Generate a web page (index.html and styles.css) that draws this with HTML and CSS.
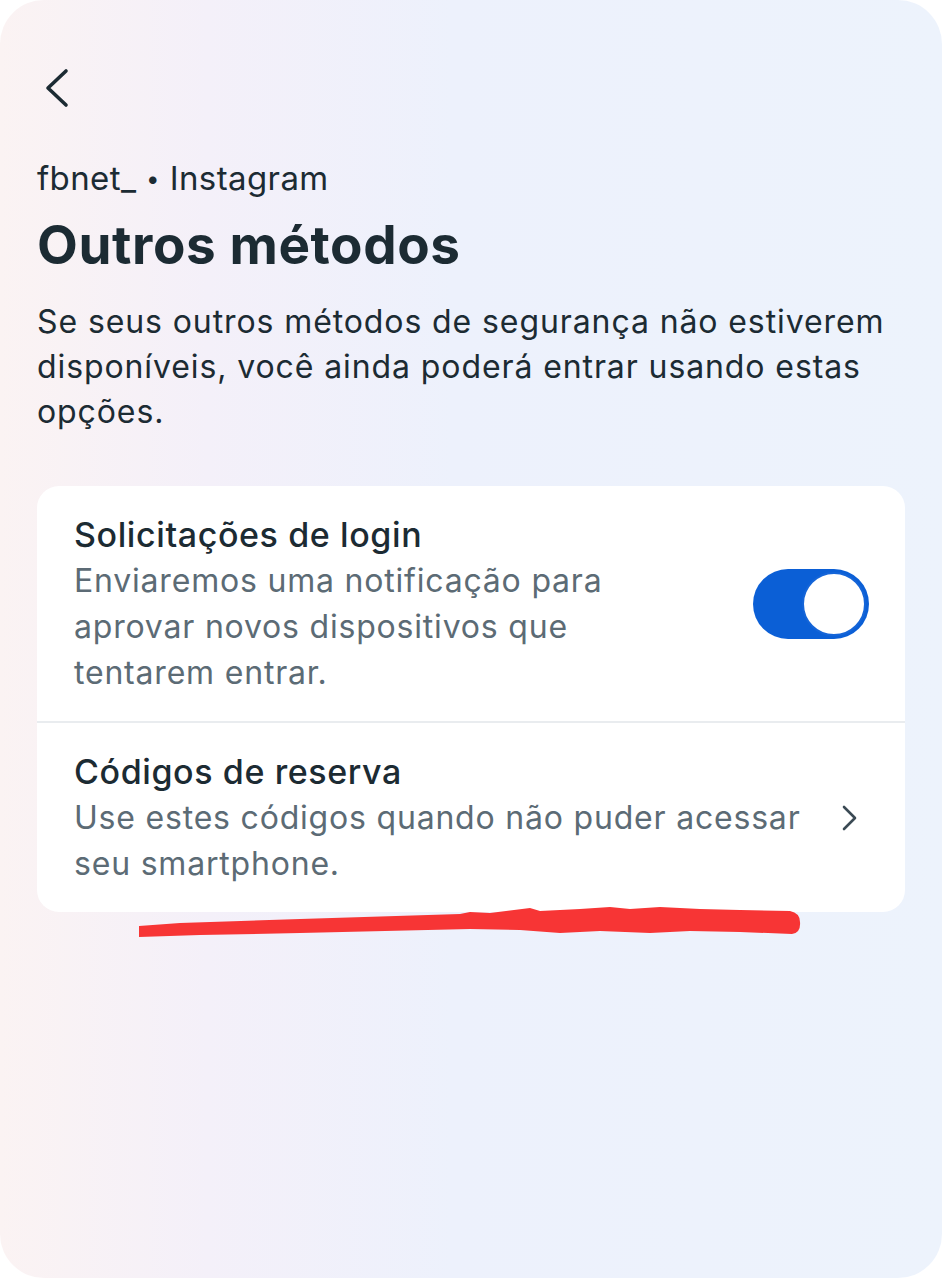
FILE: index.html
```html
<!DOCTYPE html>
<html lang="pt-BR">
<head>
  <meta charset="UTF-8">
  <meta name="viewport" content="width=device-width, initial-scale=1">
  <title>Outros métodos</title>
  <link rel="stylesheet" href="styles.css">
</head>
<body>

  <div class="screen">
    <button class="back" aria-label="Voltar">
      <svg width="28" height="40" viewBox="0 0 28 40" fill="none">
        <path d="M24 3 L6 20 L24 37" stroke="#1c2b33" stroke-width="3.6" stroke-linecap="round" stroke-linejoin="round"/>
      </svg>
    </button>

    <div class="account">fbnet_ <span class="dot">•</span> Instagram</div>
    <h1>Outros métodos</h1>
    <p class="intro">Se seus outros métodos de segurança não estiverem disponíveis, você ainda poderá entrar usando estas opções.</p>

    <div class="card">
      <div class="row">
        <div class="row-text narrow">
          <div class="row-title">Solicitações de login</div>
          <div class="row-sub">Enviaremos uma notificação para aprovar novos dispositivos que tentarem entrar.</div>
        </div>
        <div class="toggle on"><span class="knob"></span></div>
      </div>
      <div class="row">
        <div class="row-text">
          <div class="row-title">Códigos de reserva</div>
          <div class="row-sub">Use estes códigos quando não puder acessar seu smartphone.</div>
        </div>
        <svg class="chevron" width="20" height="26" viewBox="0 0 20 26" fill="none">
          <path d="M5 2 L16 13 L5 24" stroke="#3b4a54" stroke-width="2.6" stroke-linecap="round" stroke-linejoin="round"/>
        </svg>
      </div>
    </div>

    <svg class="scribble" width="680" height="45" viewBox="0 0 680 45">
      <path d="M9 26 L50 23 L170 19 L330 14 L340 12 L360 13 L400 8 L410 11 L450 9 L480 7 L500 9 L530 7 L570 9 L610 10 L660 11 Q670 13 670 22 Q671 33 662 34 L610 32 L560 31 L520 33 L470 31 L430 33 L390 30 L340 29 L170 33 L70 35 L9 37 Z" fill="#f73535"/>
    </svg>
  </div>

</body>
</html>
```

FILE: styles.css
```css
body {
  margin: 0;
  background: #fff;
  font-family: Inter, 'Noto Sans', sans-serif;
  color: #1c2b33;
}

.screen {
  position: relative;
  box-sizing: border-box;
  height: 1278px;
  padding: 0 37px;
  border-radius: 44px;
  background: linear-gradient(90deg, #fbf3f3 0%, #f4f0f9 22%, #edf1fc 48%, #edf3fc 100%);
  overflow: hidden;
}

.back {
  display: block;
  margin: 68px 0 0 5px;
  padding: 0;
  border: none;
  background: none;
  height: 40px;
}

.account {
  margin-top: 50px;
  font-size: 33px;
  line-height: 40px;
  letter-spacing: 0.4px;
}

.account .dot {
  font-size: 24px;
  vertical-align: 3px;
}

h1 {
  margin: 17px 0 0;
  font-size: 53px;
  line-height: 58px;
  font-weight: 700;
  letter-spacing: 0.6px;
}

.intro {
  margin: 25px 0 0;
  font-size: 32px;
  line-height: 45px;
  letter-spacing: 0.9px;
}

.card {
  margin-top: 52px;
  background: #fff;
  border-radius: 22px;
  overflow: hidden;
}

.row {
  display: flex;
  align-items: center;
  justify-content: space-between;
  padding: 26px 36px 25px 37px;
}

.row + .row {
  border-top: 2px solid #e9ecef;
}

.row-text {
  max-width: 760px;
}

.row-text.narrow {
  max-width: 620px;
}

.row-title {
  font-size: 34px;
  line-height: 46px;
  letter-spacing: 0.6px;
  font-weight: 500;
  color: #1c2b33;
}

.row-sub {
  font-size: 32px;
  line-height: 46px;
  letter-spacing: 0.8px;
  color: #5c6b75;
}

.toggle {
  display: flex;
  align-items: center;
  justify-content: flex-end;
  box-sizing: border-box;
  width: 116px;
  height: 70px;
  padding: 3px;
  border-radius: 35px;
  background: #0b5fd6;
}

.knob {
  box-sizing: border-box;
  width: 64px;
  height: 64px;
  border-radius: 50%;
  background: #fff;
  border: 2px solid #1565d8;
}

.chevron {
  margin-right: 10px;
}

.scribble {
  position: absolute;
  left: 130px;
  top: 900px;
}
```
